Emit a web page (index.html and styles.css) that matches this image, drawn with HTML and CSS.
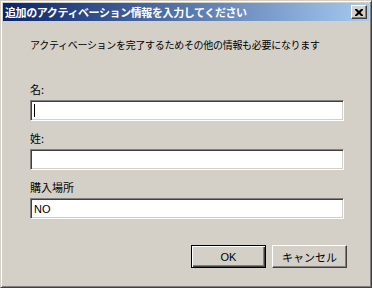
FILE: index.html
```html
<!DOCTYPE html>
<html>
<head>
  <meta charset="utf-8">
  <title>追加のアクティベーション情報</title>
  <link rel="stylesheet" href="styles.css">
</head>
<body>

  <div class="dialog">
    <div class="titlebar">
      <span class="title">追加のアクティベーション情報を入力してください</span>
      <div class="close-btn">
        <svg width="8" height="7" viewBox="0 0 8 7">
          <path d="M0 0h2l2 2 2-2h2v1l-2.5 2.5L8 6v1H6L4 5 2 7H0V6l2.5-2.5L0 1z" fill="#000"/>
        </svg>
      </div>
    </div>

    <div class="content">
      <p class="message">アクティベーションを完了するためその他の情報も必要になります</p>

      <div class="field first">
        <label>名:</label>
        <div class="textbox"><span class="caret"></span></div>
      </div>

      <div class="field">
        <label>姓:</label>
        <div class="textbox"></div>
      </div>

      <div class="field">
        <label>購入場所</label>
        <div class="textbox">NO</div>
      </div>

      <div class="buttons">
        <button class="btn default">OK</button>
        <button class="btn">キャンセル</button>
      </div>
    </div>
  </div>

</body>
</html>
```

FILE: styles.css
```css
html, body {
  margin: 0;
  padding: 0;
  background: #d4d0c8;
}

.dialog {
  width: 372px;
  height: 288px;
  box-sizing: border-box;
  border: 1px solid;
  border-color: #d4d0c8 #404040 #404040 #d4d0c8;
  box-shadow: inset 1px 1px #fff, inset -1px -1px #808080;
  padding: 2px;
  background: #d4d0c8;
  font-family: "Liberation Sans", "Noto Sans CJK JP", sans-serif;
  font-size: 11px;
  color: #000;
  display: flex;
  flex-direction: column;
}

/* Title bar */
.titlebar {
  height: 18px;
  display: flex;
  align-items: center;
  justify-content: space-between;
  padding: 0 2px 0 2px;
  background: linear-gradient(to right, #0a246a, #a6caf0);
}

.title {
  color: #fff;
  font-family: "Noto Sans CJK JP", sans-serif;
  font-weight: bold;
  font-size: 11px;
  letter-spacing: -0.4px;
  line-height: 18px;
  white-space: nowrap;
}

.close-btn {
  width: 16px;
  height: 14px;
  box-sizing: border-box;
  background: #d4d0c8;
  border: 1px solid;
  border-color: #fff #404040 #404040 #fff;
  box-shadow: inset -1px -1px #808080;
  display: flex;
  align-items: center;
  justify-content: center;
}

/* Body */
.content {
  flex: 1;
  padding: 17px 25px 0 27px;
  display: flex;
  flex-direction: column;
}

.message {
  margin: 0;
  font-family: "Noto Sans CJK JP", sans-serif;
  font-size: 10px;
  letter-spacing: -0.3px;
  line-height: 14px;
  white-space: nowrap;
}

.field {
  display: flex;
  flex-direction: column;
  gap: 4px;
  margin-top: 10px;
}

.field.first {
  margin-top: 30px;
}

.field label {
  font-family: "Noto Sans CJK JP", sans-serif;
  font-size: 11px;
  line-height: 14px;
}

.textbox {
  height: 21px;
  box-sizing: border-box;
  background: #fff;
  border: 1px solid;
  border-color: #808080 #fff #fff #808080;
  box-shadow: inset 1px 1px #404040, inset -1px -1px #d4d0c8;
  padding: 0 3px;
  display: flex;
  align-items: center;
  font-size: 11px;
}

.caret {
  width: 1px;
  height: 13px;
  background: #000;
}

/* Buttons */
.buttons {
  display: flex;
  justify-content: flex-end;
  gap: 6px;
  margin-top: 26px;
  margin-right: -3px;
}

.btn {
  width: 75px;
  height: 23px;
  box-sizing: border-box;
  margin: 0;
  padding: 0;
  background: #d4d0c8;
  border: 1px solid;
  border-color: #fff #404040 #404040 #fff;
  box-shadow: inset -1px -1px #808080;
  font-family: "Liberation Sans", "Noto Sans CJK JP", sans-serif;
  font-size: 11px;
  color: #000;
}

.btn.default {
  border: 1px solid #000;
  box-shadow: inset 1px 1px #fff, inset -1px -1px #404040, inset -2px -2px #808080;
}
```
